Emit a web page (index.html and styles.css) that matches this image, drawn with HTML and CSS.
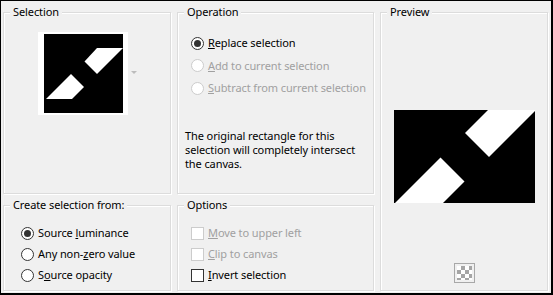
FILE: index.html
```html
<!DOCTYPE html>
<html>
<head>
    <title>Load Selection From Alpha</title>
    <link rel="stylesheet" href="styles.css">
</head>
<body>
    <div class="dialog">
        <fieldset class="group">
            <legend>Selection</legend>
            <div class="thumb-row">
                <div class="thumb">
                    <svg width="79" height="79" viewBox="0 0 79 79">
                        <rect width="79" height="79" fill="#000"/>
                        <polygon points="53,14 79,14 53,40 40.5,27.5" fill="#fff"/>
                        <polygon points="27,40 40,53 28,65 2,65" fill="#fff"/>
                    </svg>
                </div>
                <span class="drop-arrow"></span>
            </div>
        </fieldset>
        <fieldset class="group">
            <legend>Operation</legend>
            <div class="choices op-choices">
                <div class="choice"><span class="radio checked"></span><span><u>R</u>eplace selection</span></div>
                <div class="choice disabled"><span class="radio"></span><span><u>A</u>dd to current selection</span></div>
                <div class="choice disabled"><span class="radio"></span><span><u>S</u>ubtract from current selection</span></div>
            </div>
            <p class="note">The original rectangle for this<br>selection will completely intersect<br>the canvas.</p>
        </fieldset>
        <fieldset class="group preview">
            <legend>Preview</legend>
            <svg class="preview-img" width="141" height="93" viewBox="0 0 141 93">
                <rect width="141" height="93" fill="#000"/>
                <polygon points="94,0 141,0 141,1 95,47 71,23" fill="#fff"/>
                <polygon points="46.5,47.5 70.5,71.5 49,93 1,93" fill="#fff"/>
            </svg>
            <div class="checker"><div class="checker-in"></div></div>
        </fieldset>
        <fieldset class="group">
            <legend>Create selection from:</legend>
            <div class="choices create-choices">
                <div class="choice"><span class="radio checked"></span><span>Source <u>l</u>uminance</span></div>
                <div class="choice"><span class="radio"></span><span>Any non-<u>z</u>ero value</span></div>
                <div class="choice"><span class="radio"></span><span>S<u>o</u>urce opacity</span></div>
            </div>
        </fieldset>
        <fieldset class="group">
            <legend>Options</legend>
            <div class="choices opt-choices">
                <div class="choice disabled"><span class="check"></span><span><u>M</u>ove to upper left</span></div>
                <div class="choice disabled"><span class="check"></span><span><u>C</u>lip to canvas</span></div>
                <div class="choice"><span class="check"></span><span><u>I</u>nvert selection</span></div>
            </div>
        </fieldset>
    </div>
</body>
</html>
```

FILE: styles.css
```css
body {
    margin: 0;
    background-color: #f0f0f0;
    font-family: "Noto Sans", "Open Sans", sans-serif;
    font-size: 11px;
    letter-spacing: -0.1px;
    color: #000;
}
.dialog {
    width: 553px;
    height: 295px;
    box-sizing: border-box;
    border-style: solid;
    border-color: #000;
    border-width: 1px 2px 2px 1px;
    padding: 3px 3px 2px 2px;
    display: grid;
    grid-template-columns: 168px 197px 168px;
    grid-template-rows: 190px 94px;
    column-gap: 6px;
    row-gap: 3px;
}
.group {
    margin: 0;
    padding: 0;
    min-width: 0;
    border: 1px solid #dcdcdc;
    box-shadow: inset 1px 1px 0 #fff, 1px 1px 0 #fff;
}
.group legend {
    margin-left: 6px;
    padding: 0 3px;
    line-height: 16px;
    background-color: #f0f0f0;
}
.preview {
    grid-column: 3;
    grid-row: 1 / span 2;
    display: flex;
    flex-direction: column;
    align-items: center;
}
.thumb-row {
    display: flex;
    justify-content: center;
    align-items: center;
    gap: 3px;
    margin-top: 12px;
    padding-left: 1px;
}
.thumb {
    background-color: #fff;
    padding: 2px 5px 2px 6px;
    display: flex;
}
.drop-arrow {
    width: 0;
    height: 0;
    border-left: 3px solid transparent;
    border-right: 3px solid transparent;
    border-top: 3px solid #bcbcbc;
    margin-top: -2px;
}
.choices {
    display: flex;
    flex-direction: column;
}
.choice {
    display: flex;
    align-items: center;
    gap: 4px;
    line-height: 16px;
    height: 16px;
    white-space: nowrap;
}
.choice.disabled {
    color: #a0a0a0;
}
.op-choices {
    margin-top: 15px;
    padding-left: 13px;
    gap: 6.5px;
}
.create-choices {
    margin-top: 12px;
    padding-left: 17px;
    gap: 5px;
}
.opt-choices {
    margin-top: 12px;
    padding-left: 13px;
    gap: 5px;
}
.radio, .check {
    width: 13px;
    height: 13px;
    box-sizing: border-box;
    border: 1px solid #333;
    background-color: #fff;
    flex: none;
    display: flex;
    align-items: center;
    justify-content: center;
}
.radio {
    border-radius: 50%;
}
.radio.checked::after {
    content: "";
    width: 7px;
    height: 7px;
    border-radius: 50%;
    background-color: #333;
}
.disabled .radio, .disabled .check {
    border-color: #cccccc;
}
.note {
    margin: 33px 0 0 7px;
    line-height: 14px;
}
.preview-img {
    margin-top: 90px;
    display: block;
}
.checker {
    margin-top: 60px;
    width: 21px;
    height: 20px;
    box-sizing: border-box;
    border: 1px solid #a8a8a8;
    padding: 2px;
}
.checker-in {
    width: 100%;
    height: 100%;
    background: conic-gradient(#a5a5a5 25%, #fff 0 50%, #a5a5a5 0 75%, #fff 0) 0 0 / 8px 8px;
}
```
